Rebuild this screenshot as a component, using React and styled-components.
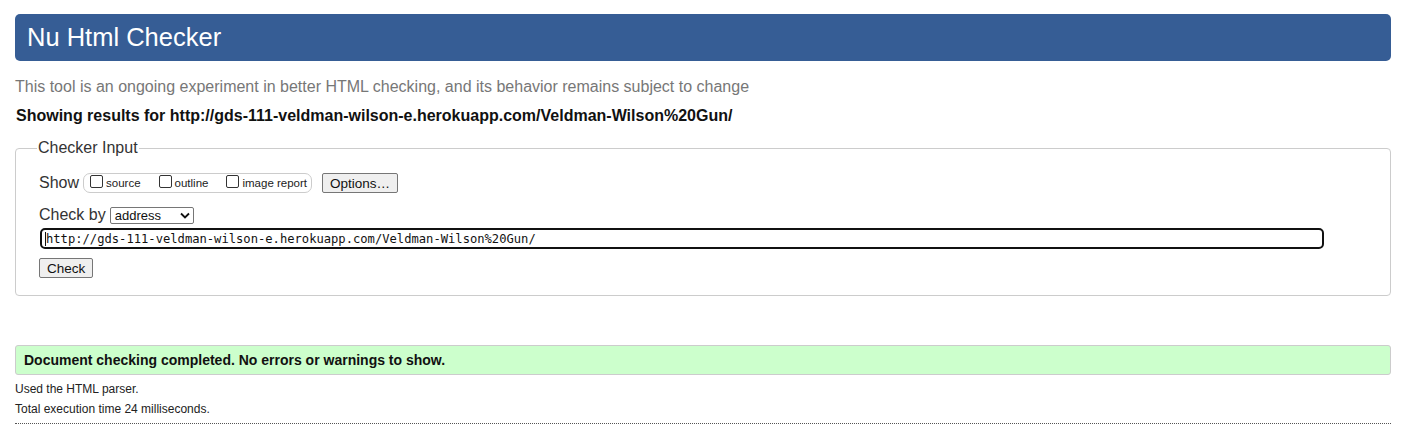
import styled, { createGlobalStyle } from 'styled-components';

const GlobalStyle = createGlobalStyle`
  body {
    margin: 0;
    background: #fff;
    font-family: "Liberation Sans", Arial, sans-serif;
    color: #222;
  }
`;

// Page wrapper
const Page = styled.div`
  padding: 14px 14px 0 15px;
`;

// Blue title bar
const Header = styled.h1`
  margin: 0;
  height: 47px;
  display: flex;
  align-items: center;
  padding: 0 12px;
  background: #365d95;
  border-radius: 5px;
  color: #fff;
  font-size: 25.5px;
  font-weight: normal;
`;

const Intro = styled.p`
  margin: 17px 0 0 0;
  font-size: 16px;
  color: #777;
`;

const ResultsFor = styled.p`
  margin: 11px 0 0 1px;
  font-size: 16px;
  font-weight: bold;
  color: #111;
`;

const Fieldset = styled.fieldset`
  margin: 14px 0 0 0;
  padding: 6px 22px 17px 23px;
  border: 1px solid #ccc;
  border-radius: 4px;
`;

const Legend = styled.legend`
  font-size: 16px;
  color: #333;
  padding: 0 1px;
  margin-left: -2px;
`;

const Row = styled.div`
  display: flex;
  align-items: center;
  margin-top: ${p => p.$top || 0}px;
`;

const Label = styled.span`
  font-size: 16px;
  color: #333;
  margin-right: 3px;
`;

// Rounded box holding the show checkboxes
const OptionGroup = styled.div`
  display: flex;
  align-items: center;
  height: 18px;
  padding: 0 4px 0 6px;
  margin-left: 1px;
  border: 1px solid #ccc;
  border-radius: 7px;
`;

const Check = styled.label`
  display: flex;
  align-items: center;
  font-size: 11.5px;
  color: #222;
  margin-right: ${p => p.$gap || 0}px;
`;

const Box = styled.span`
  width: 11px;
  height: 11px;
  border: 1px solid #333;
  border-radius: 2px;
  margin-right: 3px;
  margin-top: -3px;
  background: #fff;
`;

const Button = styled.button`
  font-family: "Liberation Sans", Arial, sans-serif;
  font-size: 13.5px;
  color: #111;
  background: #efefef;
  border: 1px solid #767676;
  border-radius: 2px;
  padding: 1px ${p => p.$pad || 6}px;
  height: ${p => p.$h || 20}px;
  margin-left: ${p => p.$left || 0}px;
`;

const Select = styled.div`
  display: flex;
  align-items: center;
  justify-content: space-between;
  width: 84px;
  height: 17px;
  box-sizing: border-box;
  border: 1px solid #767676;
  border-radius: 2px;
  padding: 0 3px 0 4px;
  font-size: 13px;
  color: #111;
  margin-left: 1px;
`;

const UrlInput = styled.div`
  margin-top: 4px;
  margin-left: 1px;
  width: 1284px;
  height: 21px;
  box-sizing: border-box;
  border: 2px solid #111;
  border-radius: 5px;
  display: flex;
  align-items: center;
  padding-left: 3px;
  font-family: "DejaVu Sans Mono", "Liberation Mono", monospace;
  font-size: 12.15px;
  color: #111;
`;

const Caret = styled.span`
  width: 1px;
  height: 14px;
  background: #111;
`;

const Success = styled.div`
  margin-top: 49px;
  height: 30px;
  box-sizing: border-box;
  display: flex;
  align-items: center;
  padding-left: 8px;
  background: #ccffcc;
  border: 1px solid #ccc;
  border-radius: 3px;
  font-size: 14px;
  font-weight: bold;
  color: #111;
`;

const Note = styled.p`
  margin: ${p => p.$top}px 0 0 0;
  font-size: 12px;
  color: #222;
`;

const Rule = styled.hr`
  margin: 7px 0 0 0;
  border: 0;
  border-top: 1px dotted #555;
`;

function App() {
  return (
    <>
      <GlobalStyle />
      <Page>
        <Header>Nu Html Checker</Header>
        <Intro>This tool is an ongoing experiment in better HTML checking, and its behavior remains subject to change</Intro>
        <ResultsFor>Showing results for http://gds-111-veldman-wilson-e.herokuapp.com/Veldman-Wilson%20Gun/</ResultsFor>

        <Fieldset>
          <Legend>Checker Input</Legend>
          <Row $top={10}>
            <Label>Show</Label>
            <OptionGroup>
              <Check $gap={18}><Box />source</Check>
              <Check $gap={18}><Box />outline</Check>
              <Check><Box />image report</Check>
            </OptionGroup>
            <Button $left={10} $pad={7}>Options…</Button>
          </Row>
          <Row $top={13}>
            <Label>Check by</Label>
            <Select>
              <span>address</span>
              <svg width="10" height="7" viewBox="0 0 10 7">
                <path d="M1 1.5 L5 5.5 L9 1.5" fill="none" stroke="#111" strokeWidth="1.8" />
              </svg>
            </Select>
          </Row>
          <UrlInput>
            <Caret />
            http://gds-111-veldman-wilson-e.herokuapp.com/Veldman-Wilson%20Gun/
          </UrlInput>
          <Row $top={9}>
            <Button $pad={7}>Check</Button>
          </Row>
        </Fieldset>

        <Success>Document checking completed. No errors or warnings to show.</Success>
        <Note $top={7}>Used the HTML parser.</Note>
        <Note $top={6}>Total execution time 24 milliseconds.</Note>
        <Rule />
      </Page>
    </>
  );
}

export default App;
